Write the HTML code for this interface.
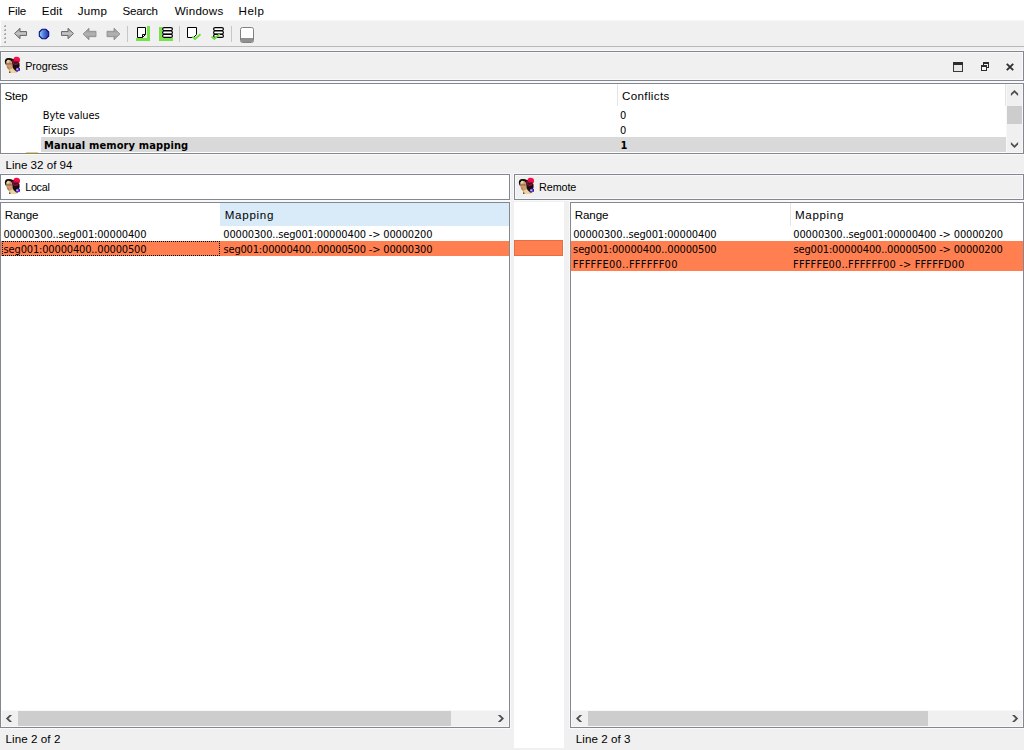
<!DOCTYPE html>
<html><head><meta charset="utf-8"><title>IDA Teams merge</title>
<style>
*{box-sizing:border-box;margin:0;padding:0}
html,body{width:1024px;height:750px;overflow:hidden;background:#f0f0f0}
body{position:relative;font-family:"Liberation Sans",sans-serif;font-size:12px;color:#000}
.abs{position:absolute}
svg{position:absolute;overflow:visible}
.t{position:absolute;white-space:nowrap;line-height:16px;height:16px;font-family:"Liberation Sans",sans-serif}
.m{font-size:11.6px}
.s{font-size:10.8px}
.d{margin-top:1px;font-family:"DejaVu Sans Condensed","Liberation Sans",sans-serif;font-size:11px;line-height:15px;height:15px;position:absolute;white-space:nowrap;letter-spacing:-0.14px}
.b{font-weight:bold}
.panel{position:absolute;border:1px solid #828790;box-shadow:0 0 0 1px #f9f9f9}
.ring{position:absolute;border:1px solid #f9f9f9;pointer-events:none}
.gp{box-shadow:0 0 0 1px #f9f9f9, inset 0 0 0 1px #f9f9f9}
.sb{position:absolute;background:#f0f0f0;box-shadow:0 0 0 1px #f8f8f8}
.th{position:absolute;background:#cdcdcd}
.vsep{position:absolute;width:1px;background:#e5e5e5}
.tsep{position:absolute;width:1px;height:16px;top:26px;background:#c6c6c6}
</style></head><body>
<!-- menu bar -->
<div class="abs" style="left:0;top:0;width:1024px;height:20px;background:#fff"></div>
<div class="abs" style="left:0;top:20px;width:1024px;height:1px;background:#f7f7f7"></div>

<!-- toolbar -->
<div class="abs" style="left:0;top:21px;width:1px;height:25px;background:#fdfdfd"></div>
<div class="abs" style="left:0;top:46px;width:1024px;height:1px;background:#b9b9b9"></div>
<svg id="toolbar" style="left:0;top:21px" width="270" height="26" viewBox="0 21 270 26">
<defs>
<linearGradient id="ga" x1="0" y1="0" x2="0" y2="1"><stop offset="0" stop-color="#8a8a8a"/><stop offset="0.5" stop-color="#c4c4c4"/><stop offset="1" stop-color="#8e8e8e"/></linearGradient>
<linearGradient id="gb" x1="0" y1="0" x2="1" y2="0"><stop offset="0" stop-color="#8fd8f4"/><stop offset="0.5" stop-color="#4a78d0"/><stop offset="1" stop-color="#2a30a8"/></linearGradient>
<linearGradient id="gc" x1="0" y1="0" x2="0" y2="1"><stop offset="0" stop-color="#8c8c8c"/><stop offset="0.5" stop-color="#b4b4b4"/><stop offset="1" stop-color="#8c8c8c"/></linearGradient>
</defs>
<g fill="#a8a8a8"><rect x="4" y="25" width="2" height="2"/><rect x="4" y="29" width="2" height="2"/><rect x="4" y="33" width="2" height="2"/><rect x="4" y="37" width="2" height="2"/><rect x="4" y="41" width="2" height="2"/></g>
<g fill="#d8d8d8"><rect x="4" y="25" width="1" height="1"/><rect x="4" y="29" width="1" height="1"/><rect x="4" y="33" width="1" height="1"/><rect x="4" y="37" width="1" height="1"/><rect x="4" y="41" width="1" height="1"/></g>
<path d="M14.5 33.5 L20 28.3 L20 31.5 L26.5 31.5 L26.5 35.5 L20 35.5 L20 38.7 Z" fill="url(#ga)" stroke="#6c6c6c" stroke-width="1" stroke-linejoin="miter"/>
<path d="M42 29.3 L46 29.3 L48.7 32 L48.7 36 L46 38.7 L42 38.7 L39.3 36 L39.3 32 Z" fill="url(#gb)" stroke="#0a0a84" stroke-width="1.1" stroke-linejoin="round"/>
<path d="M73.5 33.5 L68 28.3 L68 31.5 L61.5 31.5 L61.5 35.5 L68 35.5 L68 38.7 Z" fill="url(#ga)" stroke="#6c6c6c" stroke-width="1"/>
<path d="M83 34 L89 28.2 L89 31.3 L96 31.3 L96 36.7 L89 36.7 L89 39.8 Z" fill="url(#gc)" stroke="#8a8a8a" stroke-width="0.8"/>
<path d="M120 34 L114 28.2 L114 31.3 L107 31.3 L107 36.7 L114 36.7 L114 39.8 Z" fill="url(#gc)" stroke="#8a8a8a" stroke-width="0.8"/>
<!-- icon1: page + green bracket -->
<path d="M136 38 H147 V26 H150 V41 H136 Z" fill="#78e048"/>
<path d="M137.5 27.5 H145.5 V34.5 L142.5 37.5 H137.5 Z" fill="#fff" stroke="#000" stroke-width="1"/>
<path d="M145.5 34.5 H142.5 V37.5" fill="none" stroke="#000" stroke-width="1"/>
<!-- icon2: stack + green L -->
<path d="M159 27 H162 V38 H173 V41 H159 Z" fill="#78e048"/>
<g fill="#fff" stroke="#000" stroke-width="1.2"><rect x="162.6" y="27.6" width="9.8" height="3" rx="1.5"/><rect x="162.6" y="31" width="9.8" height="3" rx="1.5"/><rect x="162.6" y="34.4" width="9.8" height="3" rx="1.5"/></g>
<!-- icon3: page + check -->
<path d="M187.5 27.5 H196.5 V34.5 L193.5 37.5 H187.5 Z" fill="#fff" stroke="#000" stroke-width="1"/>
<path d="M192.3 36.6 L195 39 L200.5 34.2" fill="none" stroke="#68dc40" stroke-width="1.8"/>
<!-- icon4: stack + check -->
<g fill="#fff" stroke="#000" stroke-width="1.2"><rect x="213.6" y="27.6" width="9.8" height="3" rx="1.5"/><rect x="213.6" y="31" width="9.8" height="3" rx="1.5"/><rect x="213.6" y="34.4" width="9.8" height="3" rx="1.5"/></g>
<path d="M211.5 36.6 L214.3 39 L219.6 34.2" fill="none" stroke="#68dc40" stroke-width="1.8"/>
<!-- icon5: window -->
<rect x="240.5" y="27.5" width="13" height="15" rx="2" fill="#fff" stroke="#808080" stroke-width="1"/>
<path d="M241 38 H253 V40.5 Q253 42 251.5 42 H242.5 Q241 42 241 40.5 Z" fill="#909090"/>
</svg>
<div class="tsep" style="left:127px"></div>
<div class="tsep" style="left:179px"></div>
<div class="tsep" style="left:231px"></div>

<!-- Progress title -->
<div class="panel gp" style="left:0;top:51px;width:1024px;height:30px;background:#f0f0f0"></div>

<!-- Progress table -->
<div class="panel" style="left:0;top:83px;width:1024px;height:71px;background:#fff"></div>
<div class="vsep" style="left:617px;top:84px;height:22px"></div>
<div class="vsep" style="left:1005px;top:84px;height:22px"></div>
<div class="abs" style="left:41px;top:137px;width:965px;height:15px;background:#d9d9d9"></div>
<div class="abs" style="left:26px;top:152px;width:12px;height:1px;background:#f0d060"></div>
<div class="sb" style="left:1007px;top:85px;width:15px;height:67px"></div>
<div class="th" style="left:1007px;top:106px;width:15px;height:18px"></div>

<!-- Local title -->
<div class="panel" style="left:0;top:174px;width:510px;height:26px;background:#fff"></div>
<!-- Remote title -->
<div class="panel gp" style="left:514px;top:174px;width:510px;height:26px;background:#f0f0f0"></div>

<!-- Local table -->
<div class="panel" style="left:0;top:202px;width:510px;height:526px;background:#fff"></div>
<div class="abs" style="left:220px;top:203px;width:289px;height:23px;background:#d9ebf9"></div>
<div class="abs" style="left:1px;top:241px;width:508px;height:15px;background:#ff7f50"></div>
<div class="abs" style="left:2px;top:241px;width:218px;height:15px;border:1px dotted #000"></div>
<div class="sb" style="left:2px;top:711px;width:506px;height:15px"></div>
<div class="th" style="left:18px;top:711px;width:433px;height:15px"></div>

<!-- middle strip -->
<div class="abs" style="left:514px;top:202px;width:50px;height:546px;background:#fff"></div>
<div class="abs" style="left:514px;top:240px;width:49px;height:16px;background:#ff7f50;border:1px solid #e36f42"></div>

<!-- Remote table -->
<div class="panel" style="left:570px;top:202px;width:454px;height:526px;background:#fff"></div>
<div class="vsep" style="left:790px;top:203px;height:23px"></div>
<div class="abs" style="left:571px;top:241px;width:452px;height:30px;background:#ff7f50"></div>
<div class="sb" style="left:572px;top:711px;width:450px;height:15px"></div>
<div class="th" style="left:588px;top:711px;width:340px;height:15px"></div>

<span id="m1" class="t m" style="left:8.05px;top:3px;letter-spacing:-0.157px">File</span>
<span id="m2" class="t m" style="left:41.85px;top:3px;letter-spacing:0.115px">Edit</span>
<span id="m3" class="t m" style="left:77.79px;top:3px;letter-spacing:0.231px">Jump</span>
<span id="m4" class="t m" style="left:122.47px;top:3px;letter-spacing:-0.229px">Search</span>
<span id="m5" class="t m" style="left:174.68px;top:3px;letter-spacing:0.255px">Windows</span>
<span id="m6" class="t m" style="left:238.54px;top:3px;letter-spacing:0.483px">Help</span>
<span id="p1" class="t s" style="left:25.19px;top:58px;letter-spacing:-0.082px">Progress</span>
<span id="h1" class="t m" style="left:4.51px;top:88px;letter-spacing:-0.238px">Step</span>
<span id="h2" class="t m" style="left:621.89px;top:88px;letter-spacing:0.384px">Conflicts</span>
<span id="r1" class="d" style="left:42.73px;top:107px;letter-spacing:-0.103px">Byte values</span>
<span id="r2" class="d" style="left:42.73px;top:122px;letter-spacing:0.146px">Fixups</span>
<span id="r3" class="d b" style="left:43.95px;top:137px;letter-spacing:0.125px">Manual memory mapping</span>
<span id="c1" class="d" style="left:620.00px;top:107px">0</span>
<span id="c2" class="d" style="left:620.00px;top:122px">0</span>
<span id="c3" class="d b" style="left:620.50px;top:137px">1</span>
<span id="s1" class="t m" style="left:5.52px;top:157px;letter-spacing:-0.007px">Line 32 of 94</span>
<span id="p2" class="t s" style="left:25.18px;top:179px;letter-spacing:-0.292px">Local</span>
<span id="p3" class="t s" style="left:539.09px;top:179px;letter-spacing:-0.108px">Remote</span>
<span id="lh1" class="t m" style="left:4.80px;top:207px;letter-spacing:-0.132px">Range</span>
<span id="lh2" class="t m" style="left:224.74px;top:207px;letter-spacing:0.700px">Mapping</span>
<span id="l11" class="d" style="left:3.40px;top:226px;letter-spacing:-0.151px">00000300..seg001:00000400</span>
<span id="l12" class="d" style="left:223.33px;top:226px;letter-spacing:-0.168px">00000300..seg001:00000400 -&gt; 00000200</span>
<span id="l21" class="d" style="left:3.60px;top:241px;letter-spacing:-0.160px">seg001:00000400..00000500</span>
<span id="l22" class="d" style="left:223.49px;top:241px;letter-spacing:-0.175px">seg001:00000400..00000500 -&gt; 00000300</span>
<span id="s2" class="t m" style="left:5.52px;top:731px;letter-spacing:0.075px">Line 2 of 2</span>
<span id="rh1" class="t m" style="left:574.77px;top:207px;letter-spacing:-0.123px">Range</span>
<span id="rh2" class="t m" style="left:794.94px;top:207px;letter-spacing:0.666px">Mapping</span>
<span id="r11" class="d" style="left:573.15px;top:226px;letter-spacing:-0.138px">00000300..seg001:00000400</span>
<span id="r12" class="d" style="left:793.33px;top:226px;letter-spacing:-0.155px">00000300..seg001:00000400 -&gt; 00000200</span>
<span id="r21" class="d" style="left:573.11px;top:241px;letter-spacing:-0.134px">seg001:00000400..00000500</span>
<span id="r22" class="d" style="left:793.49px;top:241px;letter-spacing:-0.163px">seg001:00000400..00000500 -&gt; 00000200</span>
<span id="r31" class="d" style="left:572.75px;top:256px;letter-spacing:0.256px">FFFFFE00..FFFFFF00</span>
<span id="r32" class="d" style="left:793.05px;top:256px;letter-spacing:0.142px">FFFFFE00..FFFFFF00 -&gt; FFFFFD00</span>
<span id="s3" class="t m" style="left:575.81px;top:731px;letter-spacing:0.056px">Line 2 of 3</span>

<!-- icon symbol -->
<svg width="0" height="0" style="left:0;top:0"><defs>
<filter id="bl" x="-20%" y="-20%" width="140%" height="140%"><feGaussianBlur stdDeviation="0.35"/></filter>

</defs></svg>
<svg style="left:4px;top:57px" width="16" height="17" viewBox="0 0 16 17"><g filter="url(#bl)">
<path d="M0.8 4.4 Q1 1.5 4 1.1 Q7 0.8 9 2 L12 2 L15.4 6 Q16 9 15 11 L14.6 14 Q13.6 14.8 12.4 14.6 L8.6 11.4 L8 5 L4 2.8 L2.6 4.6 L2.8 8.6 Q1 7.8 0.8 4.4 Z" fill="#120c0c"/>
<path d="M2.5 4.8 Q2.8 2.9 4.6 2.8 Q7 2.8 7.9 5 Q8.4 7.4 8.2 9.4 Q8.4 10.8 9.4 11.6 L12.8 15.9 L5.2 15.9 L5.4 13.2 Q3.6 12.6 2.9 10.6 Q2.1 7.6 2.5 4.8 Z" fill="#c89e70"/>
<path d="M2.6 4.4 Q3.2 3 4.8 3 Q5.8 3.2 5.6 4.6 Q5 5.8 2.8 5.8 Z" fill="#ecd6a6"/>
<path d="M2.4 6.4 L7.6 6.2 L7.8 7.4 L2.6 7.6 Z" fill="#7a5a40" opacity="0.75"/>
<path d="M4.8 8.6 Q6.4 8.2 7.4 9.4 Q7.2 11 5.8 11.2 Q4.8 10.4 4.8 8.6 Z" fill="#d89870"/>
<path d="M2.8 9 Q3.4 11.6 5.2 12.6 L4.6 10 Z" fill="#b87850"/>
<path d="M6 12.4 L8.6 11.2 L12.6 15.9 L6.4 15.9 Z" fill="#ecd4a0"/>
<path d="M5.2 14.6 L6.2 14.4 L6.4 15.9 L5.2 15.9 Z" fill="#5a3018"/>
<path d="M9.4 2.2 Q9.8 0.2 11.6 -0.2 Q14.2 -0.6 15.6 1 Q16.4 2.8 15.8 4.4 L14.8 5.4 L10.2 4.4 Z" fill="#f40c48"/>
<path d="M8 3.6 Q9 2.6 10.2 3.4 L14.8 4.2 Q15 6.4 13.8 7.6 Q11.6 8.4 9.6 7.4 Q8.2 6 8 3.6 Z" fill="#8e1238"/>
<path d="M9.6 4.2 Q10.4 5.8 12 5.4 L13.6 4.8 L13.4 6 Q11.6 6.8 10 6.2 Z" fill="#2a0814"/>
<rect x="12" y="10.8" width="4" height="3" rx="0.9" fill="#6c3ce0"/>
<rect x="12.3" y="11.4" width="1.8" height="1.6" rx="0.5" fill="#c8b8f4"/>
<rect x="15" y="11" width="1" height="2.6" rx="0.5" fill="#3c08c0"/>
</g></svg>
<svg style="left:4px;top:178px" width="16" height="17" viewBox="0 0 16 17"><g filter="url(#bl)">
<path d="M0.8 4.4 Q1 1.5 4 1.1 Q7 0.8 9 2 L12 2 L15.4 6 Q16 9 15 11 L14.6 14 Q13.6 14.8 12.4 14.6 L8.6 11.4 L8 5 L4 2.8 L2.6 4.6 L2.8 8.6 Q1 7.8 0.8 4.4 Z" fill="#120c0c"/>
<path d="M2.5 4.8 Q2.8 2.9 4.6 2.8 Q7 2.8 7.9 5 Q8.4 7.4 8.2 9.4 Q8.4 10.8 9.4 11.6 L12.8 15.9 L5.2 15.9 L5.4 13.2 Q3.6 12.6 2.9 10.6 Q2.1 7.6 2.5 4.8 Z" fill="#c89e70"/>
<path d="M2.6 4.4 Q3.2 3 4.8 3 Q5.8 3.2 5.6 4.6 Q5 5.8 2.8 5.8 Z" fill="#ecd6a6"/>
<path d="M2.4 6.4 L7.6 6.2 L7.8 7.4 L2.6 7.6 Z" fill="#7a5a40" opacity="0.75"/>
<path d="M4.8 8.6 Q6.4 8.2 7.4 9.4 Q7.2 11 5.8 11.2 Q4.8 10.4 4.8 8.6 Z" fill="#d89870"/>
<path d="M2.8 9 Q3.4 11.6 5.2 12.6 L4.6 10 Z" fill="#b87850"/>
<path d="M6 12.4 L8.6 11.2 L12.6 15.9 L6.4 15.9 Z" fill="#ecd4a0"/>
<path d="M5.2 14.6 L6.2 14.4 L6.4 15.9 L5.2 15.9 Z" fill="#5a3018"/>
<path d="M9.4 2.2 Q9.8 0.2 11.6 -0.2 Q14.2 -0.6 15.6 1 Q16.4 2.8 15.8 4.4 L14.8 5.4 L10.2 4.4 Z" fill="#f40c48"/>
<path d="M8 3.6 Q9 2.6 10.2 3.4 L14.8 4.2 Q15 6.4 13.8 7.6 Q11.6 8.4 9.6 7.4 Q8.2 6 8 3.6 Z" fill="#8e1238"/>
<path d="M9.6 4.2 Q10.4 5.8 12 5.4 L13.6 4.8 L13.4 6 Q11.6 6.8 10 6.2 Z" fill="#2a0814"/>
<rect x="12" y="10.8" width="4" height="3" rx="0.9" fill="#6c3ce0"/>
<rect x="12.3" y="11.4" width="1.8" height="1.6" rx="0.5" fill="#c8b8f4"/>
<rect x="15" y="11" width="1" height="2.6" rx="0.5" fill="#3c08c0"/>
</g></svg>
<svg style="left:518px;top:178px" width="16" height="17" viewBox="0 0 16 17"><g filter="url(#bl)">
<path d="M0.8 4.4 Q1 1.5 4 1.1 Q7 0.8 9 2 L12 2 L15.4 6 Q16 9 15 11 L14.6 14 Q13.6 14.8 12.4 14.6 L8.6 11.4 L8 5 L4 2.8 L2.6 4.6 L2.8 8.6 Q1 7.8 0.8 4.4 Z" fill="#120c0c"/>
<path d="M2.5 4.8 Q2.8 2.9 4.6 2.8 Q7 2.8 7.9 5 Q8.4 7.4 8.2 9.4 Q8.4 10.8 9.4 11.6 L12.8 15.9 L5.2 15.9 L5.4 13.2 Q3.6 12.6 2.9 10.6 Q2.1 7.6 2.5 4.8 Z" fill="#c89e70"/>
<path d="M2.6 4.4 Q3.2 3 4.8 3 Q5.8 3.2 5.6 4.6 Q5 5.8 2.8 5.8 Z" fill="#ecd6a6"/>
<path d="M2.4 6.4 L7.6 6.2 L7.8 7.4 L2.6 7.6 Z" fill="#7a5a40" opacity="0.75"/>
<path d="M4.8 8.6 Q6.4 8.2 7.4 9.4 Q7.2 11 5.8 11.2 Q4.8 10.4 4.8 8.6 Z" fill="#d89870"/>
<path d="M2.8 9 Q3.4 11.6 5.2 12.6 L4.6 10 Z" fill="#b87850"/>
<path d="M6 12.4 L8.6 11.2 L12.6 15.9 L6.4 15.9 Z" fill="#ecd4a0"/>
<path d="M5.2 14.6 L6.2 14.4 L6.4 15.9 L5.2 15.9 Z" fill="#5a3018"/>
<path d="M9.4 2.2 Q9.8 0.2 11.6 -0.2 Q14.2 -0.6 15.6 1 Q16.4 2.8 15.8 4.4 L14.8 5.4 L10.2 4.4 Z" fill="#f40c48"/>
<path d="M8 3.6 Q9 2.6 10.2 3.4 L14.8 4.2 Q15 6.4 13.8 7.6 Q11.6 8.4 9.6 7.4 Q8.2 6 8 3.6 Z" fill="#8e1238"/>
<path d="M9.6 4.2 Q10.4 5.8 12 5.4 L13.6 4.8 L13.4 6 Q11.6 6.8 10 6.2 Z" fill="#2a0814"/>
<rect x="12" y="10.8" width="4" height="3" rx="0.9" fill="#6c3ce0"/>
<rect x="12.3" y="11.4" width="1.8" height="1.6" rx="0.5" fill="#c8b8f4"/>
<rect x="15" y="11" width="1" height="2.6" rx="0.5" fill="#3c08c0"/>
</g></svg>

<!-- window controls -->
<svg style="left:950px;top:58px" width="70" height="18" viewBox="950 58 70 18">
<rect x="953.5" y="62.5" width="9" height="9" fill="#e8e8e8" stroke="#3a3a3a" stroke-width="1"/>
<rect x="953" y="62" width="10" height="3" fill="#2c2c2c"/>
<rect x="983.5" y="62.5" width="5" height="5" fill="#f0f0f0" stroke="#2c2c2c" stroke-width="1"/>
<rect x="983" y="62" width="6" height="2" fill="#2c2c2c"/>
<rect x="981.5" y="65.5" width="5" height="5" fill="#f4f4f4" stroke="#2c2c2c" stroke-width="1"/>
<rect x="981" y="65" width="6" height="2" fill="#2c2c2c"/>
<path d="M1006.8 63.8 L1013.2 70.2 M1013.2 63.8 L1006.8 70.2" stroke="#303030" stroke-width="1.9" fill="none"/>
</svg>

<!-- scrollbar chevrons -->
<svg style="left:0;top:0" width="1024" height="750" viewBox="0 0 1024 750" fill="#4f4f4f" stroke="none">
<polygon points="1014.5,89.9 1018.1,93.5 1018.1,96.1 1014.5,92.5 1010.9,96.1 1010.9,93.5"/>
<polygon points="1014.5,148.1 1018.1,144.5 1018.1,141.9 1014.5,145.5 1010.9,141.9 1010.9,144.5"/>
<polygon points="5.9,718.5 9.5,714.9 12.1,714.9 8.5,718.5 12.1,722.1 9.5,722.1"/>
<polygon points="504,718.5 500.4,714.9 497.8,714.9 501.4,718.5 497.8,722.1 500.4,722.1"/>
<polygon points="576,718.5 579.6,714.9 582.2,714.9 578.6,718.5 582.2,722.1 579.6,722.1"/>
<polygon points="1018.2,718.5 1014.6,714.9 1012,714.9 1015.6,718.5 1012,722.1 1014.6,722.1"/>
</svg>
</body></html>
